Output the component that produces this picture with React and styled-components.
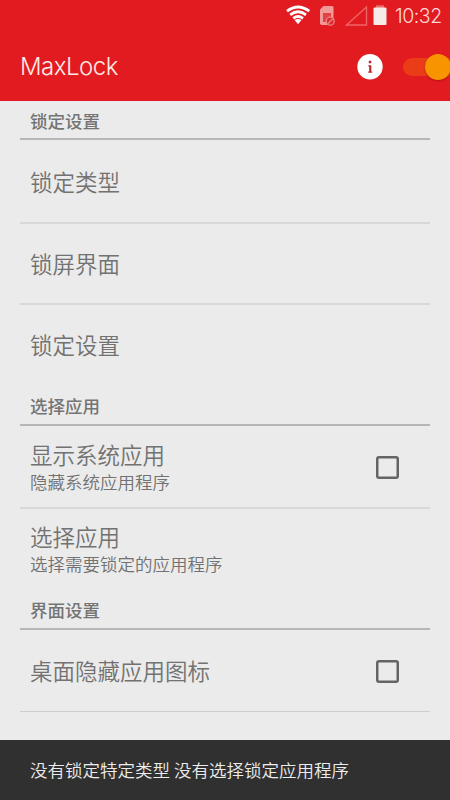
import React from "react";
import styled, { createGlobalStyle } from "styled-components";

const GlobalStyle = createGlobalStyle`
  * { box-sizing: border-box; }
  body { margin: 0; background: #ebebeb; overflow: hidden; }
`;

const Screen = styled.div`
  width: 450px;
  height: 800px;
  display: flex;
  flex-direction: column;
  overflow: hidden;
  background: #ebebeb;
  color: #727272;
  font-family: "Noto Sans CJK SC", sans-serif;
`;

const Header = styled.header`
  height: 101px;
  flex: none;
  background: #e21b20;
`;

const StatusBar = styled.div`
  height: 32px;
  display: flex;
  justify-content: flex-end;
  padding-right: 8px;
`;

const StatusIcons = styled.svg`
  width: 110px;
  height: 32px;
  flex: none;
`;

const Clock = styled.span`
  width: 47px;
  margin-left: -1px;
  font: 300 19.5px/32px Inter, sans-serif;
  letter-spacing: -0.45px;
  color: #fbd9d6;
  white-space: nowrap;
`;

const Toolbar = styled.div`
  height: 69px;
  display: flex;
  align-items: center;
  padding-left: 20px;
`;

const AppTitle = styled.h1`
  flex: 1;
  margin: 0;
  font: 300 24px/30px Inter, sans-serif;
  letter-spacing: -0.5px;
  color: #fde9e4;
`;

const InfoIcon = styled.svg`
  width: 26px;
  height: 26px;
  margin-right: 20px;
`;

const Switch = styled.div`
  width: 47px;
  height: 18px;
  display: flex;
  align-items: center;
  justify-content: flex-end;
  border-radius: 9px 0 0 9px;
  background: #ea3c16;
`;

const Thumb = styled.div`
  width: 26px;
  height: 26px;
  flex: none;
  margin-right: -1px;
  border-radius: 50%;
  background: #f79400;
  box-shadow: 0 1px 2px rgba(90, 0, 0, 0.35);
`;

const Settings = styled.main`
  flex: 1;
  padding: 0 20px;
`;

const SectionTitle = styled.h2`
  height: ${(p) => p.$height}px;
  margin: 0;
  padding: 0 10px ${(p) => p.$gap}px;
  display: flex;
  align-items: flex-end;
  border-bottom: 2px solid #b6b6b6;
  font-size: 17.5px;
  font-weight: 500;
  line-height: 26px;
  color: #747474;
`;

const Row = styled.div`
  height: ${(p) => p.$height}px;
  display: flex;
  align-items: center;
  justify-content: space-between;
  padding: 0 31px 0 10px;
  border-bottom: ${(p) => p.$line}px solid ${(p) => (p.$line === 1 ? "#cecece" : "#d8d8d8")};
`;

const Labels = styled.div`
  display: flex;
  flex-direction: column;
  padding-bottom: ${(p) => p.$lift}px;
`;

const RowTitle = styled.span`
  font-size: 22.5px;
  font-weight: 350;
  line-height: 30px;
`;

const Summary = styled.span`
  font-size: 17.5px;
  font-weight: 350;
  line-height: 25px;
`;

const Checkbox = styled.div`
  width: 23px;
  height: 23px;
  margin-top: 2px;
  border-radius: 3px;
  box-shadow: inset 0 0 0 2.5px #646464;
`;

const Snackbar = styled.footer`
  height: 60px;
  flex: none;
  padding: 0 30px;
  background: #303030;
  color: #ececec;
  font-size: 17.5px;
  font-weight: 350;
  line-height: 59px;
`;

const SECTIONS = [
  {
    title: "锁定设置",
    height: 39,
    gap: 4,
    rows: [
      { title: "锁定类型", height: 84, line: 2 },
      { title: "锁屏界面", height: 81, line: 2, lift: 2 },
      { title: "锁定设置", height: 81, line: 0, lift: 3 },
    ],
  },
  {
    title: "选择应用",
    height: 40,
    gap: 5,
    rows: [
      { title: "显示系统应用", summary: "隐藏系统应用程序", check: true, height: 83, line: 2 },
      { title: "选择应用", summary: "选择需要锁定的应用程序", height: 81, line: 0, lift: 3 },
    ],
  },
  {
    title: "界面设置",
    height: 40,
    gap: 5,
    rows: [{ title: "桌面隐藏应用图标", check: true, height: 82, line: 1, lift: 2 }],
  },
];

function SystemIcons() {
  return (
    <StatusIcons viewBox="286 0 110 32">
      <g fill="none" stroke="#fff" strokeWidth="2.8">
        <path d="M287 11.2Q298 2.8 309.3 11.2" />
        <path d="M290.2 14.8Q298 8.8 306 14.8" />
        <path d="M293.3 18.3Q298 14.8 303 18.3" />
      </g>
      <path d="M294.6 20Q298 17.8 301.5 20L298 24.3Z" fill="#fff" />
      <path d="M320 9.5L323.5 6H332Q333.5 6 333.5 7.5V23Q333.5 25 331.5 25H322Q320 25 320 23Z" fill="#f29a98" />
      <path d="M323 13V22H327.5A5 5 0 0 1 331 17V13Z" fill="#e34245" />
      <circle cx="330.2" cy="21.2" r="4" fill="#d92b30" stroke="#ef8582" strokeWidth="1.3" />
      <path d="M327.5 24L333 18.5" stroke="#ef8582" strokeWidth="1.3" />
      <path d="M346.5 25L366.5 7V25Z" fill="none" stroke="#f06466" strokeWidth="1.3" />
      <path d="M376 5.3H384V8H376Z" fill="#f06c6b" />
      <path d="M374 8H386V24.5H374Z" fill="#f5ecea" stroke="#f5ecea" strokeWidth="1" strokeLinejoin="round" />
    </StatusIcons>
  );
}

export default function App() {
  return (
    <Screen>
      <GlobalStyle />
      <Header>
        <StatusBar>
          <SystemIcons />
          <Clock>10:32</Clock>
        </StatusBar>
        <Toolbar>
          <AppTitle>MaxLock</AppTitle>
          <InfoIcon viewBox="0 0 26 26">
            <circle cx="13" cy="12.7" r="12.7" fill="#fff" />
            <path d="M11.8 6.8H14.3V9.2H11.8ZM11.3 11.2H14.3V17.4H15.2V18.8H11.2V17.4H12.2V12.6H11.3Z" fill="#b7282b" />
          </InfoIcon>
          <Switch>
            <Thumb />
          </Switch>
        </Toolbar>
      </Header>
      <Settings>
        {SECTIONS.map((section) => (
          <section key={section.title}>
            <SectionTitle $height={section.height} $gap={section.gap}>
              {section.title}
            </SectionTitle>
            {section.rows.map((row) => (
              <Row key={row.title} $height={row.height} $line={row.line}>
                <Labels $lift={row.lift || 0}>
                  <RowTitle>{row.title}</RowTitle>
                  {row.summary && <Summary>{row.summary}</Summary>}
                </Labels>
                {row.check && <Checkbox role="checkbox" aria-checked="false" />}
              </Row>
            ))}
          </section>
        ))}
      </Settings>
      <Snackbar>没有锁定特定类型 没有选择锁定应用程序</Snackbar>
    </Screen>
  );
}
